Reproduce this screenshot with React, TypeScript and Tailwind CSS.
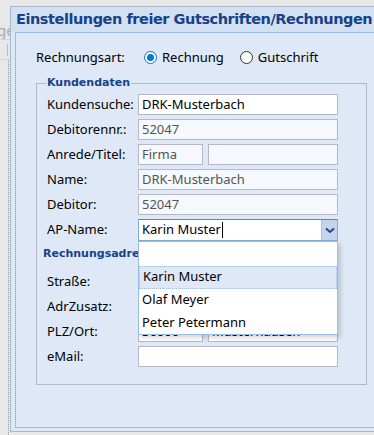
import React from "react";

const ui = { fontFamily: '"Noto Sans", "Open Sans", sans-serif' };
const title = { fontFamily: '"DejaVu Sans", Verdana, sans-serif' };
const legendFont = { fontFamily: '"DejaVu Sans", Tahoma, sans-serif' };

function Field({ value, readOnly, className = "w-[200px]" }: { value?: string; readOnly?: boolean; className?: string }) {
  return (
    <div
      className={`h-[21px] border border-[#b5b8c8] px-[3px] flex items-center text-[13px] leading-none whitespace-nowrap overflow-hidden ${
        readOnly ? "bg-[#f5f8fc] text-[#555]" : "bg-white text-black"
      } ${className}`}
    >
      {value}
    </div>
  );
}

function Row({ label, children }: { label: string; children: React.ReactNode }) {
  return (
    <div className="flex items-center h-[21px]">
      <div className="w-[91px] text-[13px] text-black">{label}</div>
      {children}
    </div>
  );
}

function Radio({ checked, label }: { checked?: boolean; label: string }) {
  return (
    <div className="flex items-center gap-[5px]">
      {checked ? (
        <span className="w-[13px] h-[13px] rounded-full border border-[#0078d7] bg-white flex items-center justify-center">
          <span className="w-[7px] h-[7px] rounded-full bg-[#0078d7]" />
        </span>
      ) : (
        <span className="w-[13px] h-[13px] rounded-full border border-[#333] bg-white" />
      )}
      <span className="text-[13px]">{label}</span>
    </div>
  );
}

const options = ["Karin Muster", "Olaf Meyer", "Peter Petermann"];

export default function App() {
  return (
    <div className="w-[374px] h-[435px] bg-[#e8e8e8] relative overflow-hidden flex" style={ui}>
      {/* app underneath */}
      <div className="w-[10px] shrink-0 flex flex-col text-[#aaa] text-[15px]">
        <div className="h-[22px]" />
        <div className="h-[18px] -ml-[3px] border-b border-[#d4d4d4] leading-[16px] overflow-hidden">ge</div>
        <div className="h-[20px] border-b border-[#d8d8d8] flex items-center justify-end pr-[2px]">
          <span className="w-px h-[12px] bg-[#bbb]" />
        </div>
        <div className="flex-1 border-r border-dotted border-[#999] mr-[1px]" />
      </div>

      {/* window */}
      <div className="mt-[6px] w-[420px] shrink-0 h-[426px] border border-[#a9b7cc] bg-[#dfe8f6] flex flex-col">
        <div className="h-[25px] px-[5px] bg-[#d3e0f1] flex items-center">
          <span className="text-[14.5px] font-bold text-[#15428b] tracking-[-0.45px] whitespace-nowrap" style={title}>
            Einstellungen freier Gutschriften/Rechnungen
          </span>
        </div>
        <div className="ml-[4px] mr-[4px] h-[396px] border border-[#99bbe8] bg-[#dfe8f6] pt-[14px] pl-[20px]">
          {/* Rechnungsart */}
          <div className="flex items-center h-[21px]">
            <div className="w-[108px] text-[13px] text-black">Rechnungsart:</div>
            <div className="flex items-center gap-[16px]">
              <Radio checked label="Rechnung" />
              <Radio label="Gutschrift" />
            </div>
          </div>

          <fieldset className="mt-[8px] w-[331px] h-[309px] border border-[#b5b8c8] pl-[9px] pr-[10px]">
            <legend className="px-[1px] text-[11px] font-bold text-[#15428b] leading-[14px]" style={legendFont}>
              Kundendaten
            </legend>
            <div className="pl-[1px] pt-[4px] flex flex-col gap-[4px]">
              <Row label="Kundensuche:">
                <Field value="DRK-Musterbach" />
              </Row>
              <Row label="Debitorennr.:">
                <Field value="52047" readOnly />
              </Row>
              <Row label="Anrede/Titel:">
                <div className="flex gap-[5px]">
                  <Field value="Firma" readOnly className="w-[65px]" />
                  <Field readOnly className="w-[130px]" />
                </div>
              </Row>
              <Row label="Name:">
                <Field value="DRK-Musterbach" readOnly />
              </Row>
              <Row label="Debitor:">
                <Field value="52047" readOnly />
              </Row>
              <div className="flex items-center h-[22px]">
                <div className="w-[91px] text-[13px] text-black">AP-Name:</div>
                <div className="relative w-[200px] h-[22px] flex border border-[#7eadd9] border-t-[#4a8ad4] bg-white">
                  <div className="flex-1 flex items-center px-[3px] text-[13px] text-black">
                    Karin Muster
                    <span className="w-px h-[16px] bg-black ml-[1px]" />
                  </div>
                  <div className="w-[16px] bg-[#c3d4ec] border-l border-[#a9c3e6] flex items-center justify-center">
                    <svg width="10" height="7" viewBox="0 0 10 7">
                      <path d="M1 1.5 L5 5 L9 1.5" fill="none" stroke="#25467e" strokeWidth="2" />
                    </svg>
                  </div>
                  {/* dropdown list */}
                  <div className="absolute left-[-1px] top-[21px] w-[200px] h-[94px] bg-white border border-[#99bbe8] shadow-[3px_3px_4px_rgba(0,0,0,0.15)] z-10 flex flex-col">
                    <div className="h-[24px]" />
                    {options.map((o, i) => (
                      <div
                        key={o}
                        className={`h-[23px] flex items-center px-[3px] text-[13px] text-black ${
                          i === 0 ? "bg-[#dfe8f6] border border-dotted border-[#a3bae9]" : ""
                        }`}
                      >
                        {o}
                      </div>
                    ))}
                  </div>
                </div>
              </div>

              <div className="-ml-[4px] mt-[2px] h-[14px] text-[11px] font-bold text-[#15428b] leading-[14px] whitespace-nowrap" style={legendFont}>
                Rechnungsadresse
              </div>
              <div className="mt-[6px] flex flex-col gap-[4px]">
                <Row label="Straße:">
                  <Field value="Hauptstraße 1" />
                </Row>
                <Row label="AdrZusatz:">
                  <Field />
                </Row>
                <Row label="PLZ/Ort:">
                  <div className="flex gap-[5px]">
                    <Field value="36000" className="w-[65px]" />
                    <Field value="Musterhausen" className="w-[130px]" />
                  </div>
                </Row>
                <Row label="eMail:">
                  <Field />
                </Row>
              </div>
            </div>
          </fieldset>
        </div>
      </div>
    </div>
  );
}
